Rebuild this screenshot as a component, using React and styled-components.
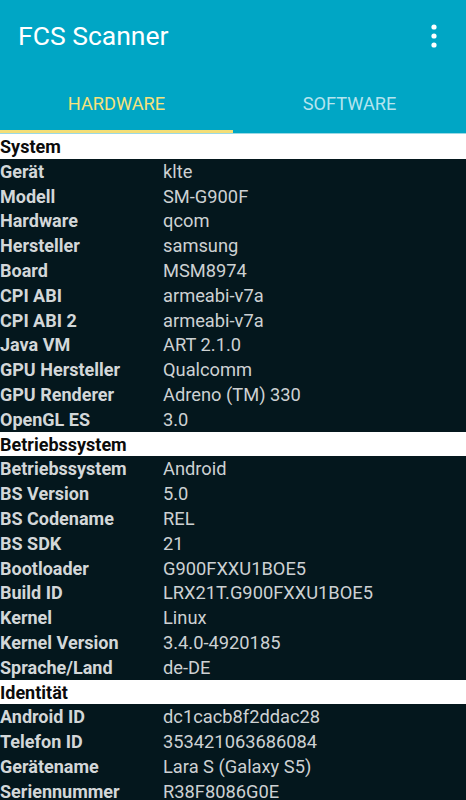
import * as React from "react";
import styled, { createGlobalStyle } from "styled-components";

const sections = [
  {
    title: "System",
    rows: [
      ["Gerät", "klte"],
      ["Modell", "SM-G900F"],
      ["Hardware", "qcom"],
      ["Hersteller", "samsung"],
      ["Board", "MSM8974"],
      ["CPI ABI", "armeabi-v7a"],
      ["CPI ABI 2", "armeabi-v7a"],
      ["Java VM", "ART 2.1.0"],
      ["GPU Hersteller", "Qualcomm"],
      ["GPU Renderer", "Adreno (TM) 330"],
      ["OpenGL ES", "3.0"],
    ],
  },
  {
    title: "Betriebssystem",
    rows: [
      ["Betriebssystem", "Android"],
      ["BS Version", "5.0"],
      ["BS Codename", "REL"],
      ["BS SDK", "21"],
      ["Bootloader", "G900FXXU1BOE5"],
      ["Build ID", "LRX21T.G900FXXU1BOE5"],
      ["Kernel", "Linux"],
      ["Kernel Version", "3.4.0-4920185"],
      ["Sprache/Land", "de-DE"],
    ],
  },
  {
    title: "Identität",
    rows: [
      ["Android ID", "dc1cacb8f2ddac28"],
      ["Telefon ID", "353421063686084"],
      ["Gerätename", "Lara S (Galaxy S5)"],
      ["Seriennummer", "R38F8086G0E"],
    ],
  },
];

const App = () => {
  return (
    <>
      <GlobalStyle />
      <Screen>
        <AppBar>
          <Title>FCS Scanner</Title>
          <MenuButton aria-label="Mehr">
            <svg width="6" height="24" viewBox="0 0 6 24">
              <circle cx="3" cy="3" r="2.6" fill="#fff" />
              <circle cx="3" cy="12" r="2.6" fill="#fff" />
              <circle cx="3" cy="21" r="2.6" fill="#fff" />
            </svg>
          </MenuButton>
        </AppBar>
        <Tabs>
          <Tab $active>HARDWARE</Tab>
          <Tab>SOFTWARE</Tab>
        </Tabs>
        <List>
          {sections.map((s) => (
            <React.Fragment key={s.title}>
              <SectionHeader>{s.title}</SectionHeader>
              {s.rows.map(([k, v]) => (
                <Row key={k}>
                  <Label>{k}</Label>
                  <Value>{v}</Value>
                </Row>
              ))}
            </React.Fragment>
          ))}
        </List>
      </Screen>
    </>
  );
};

const GlobalStyle = createGlobalStyle`
  html, body {
    margin: 0;
    padding: 0;
    background: #04171d;
  }
  body {
    font-family: Roboto, "Noto Sans", sans-serif;
    overflow: hidden;
  }
`;

const Screen = styled.div`
  width: 466px;
  height: 800px;
  overflow: hidden;
  background: #04171d;
`;

const AppBar = styled.header`
  height: 70px;
  background: #00a6c5;
  display: flex;
  align-items: center;
  justify-content: space-between;
  padding: 0 29px 0 18px;
  box-sizing: border-box;
`;

const Title = styled.h1`
  margin: 0;
  margin-top: 1px;
  color: #fff;
  font-size: 26.5px;
  font-weight: 400;
`;

const MenuButton = styled.div`
  display: flex;
  align-items: center;
  margin-top: 1px;
`;

const Tabs = styled.nav`
  height: 63px;
  background: #00a6c5;
  display: flex;
  border-bottom: 1px solid #9ad9e5;
`;

const Tab = styled.div`
  flex: 1;
  display: flex;
  align-items: center;
  justify-content: center;
  padding-top: 6px;
  box-sizing: border-box;
  font-size: 18.2px;
  font-weight: 400;
  color: ${(p) => (p.$active ? "#f6e27c" : "#b5e4ee")};
  border-bottom: 3px solid ${(p) => (p.$active ? "#f4de77" : "transparent")};
`;

const List = styled.div`
  display: flex;
  flex-direction: column;
`;

const SectionHeader = styled.div`
  height: 24.8px;
  box-sizing: border-box;
  padding-top: 1px;
  background: #fff;
  color: #0b0b0b;
  font-size: 18px;
  font-weight: 700;
  line-height: 24px;
`;

const Row = styled.div`
  height: 24.8px;
  box-sizing: border-box;
  padding-top: 1px;
  display: grid;
  grid-template-columns: 163px 1fr;
  align-items: center;
  font-size: 18px;
  line-height: 24px;
`;

const Label = styled.span`
  color: #d3d7d9;
  font-weight: 700;
  white-space: nowrap;
`;

const Value = styled.span`
  color: #cdd1d3;
  font-size: 18.3px;
  white-space: nowrap;
`;

export default App;
